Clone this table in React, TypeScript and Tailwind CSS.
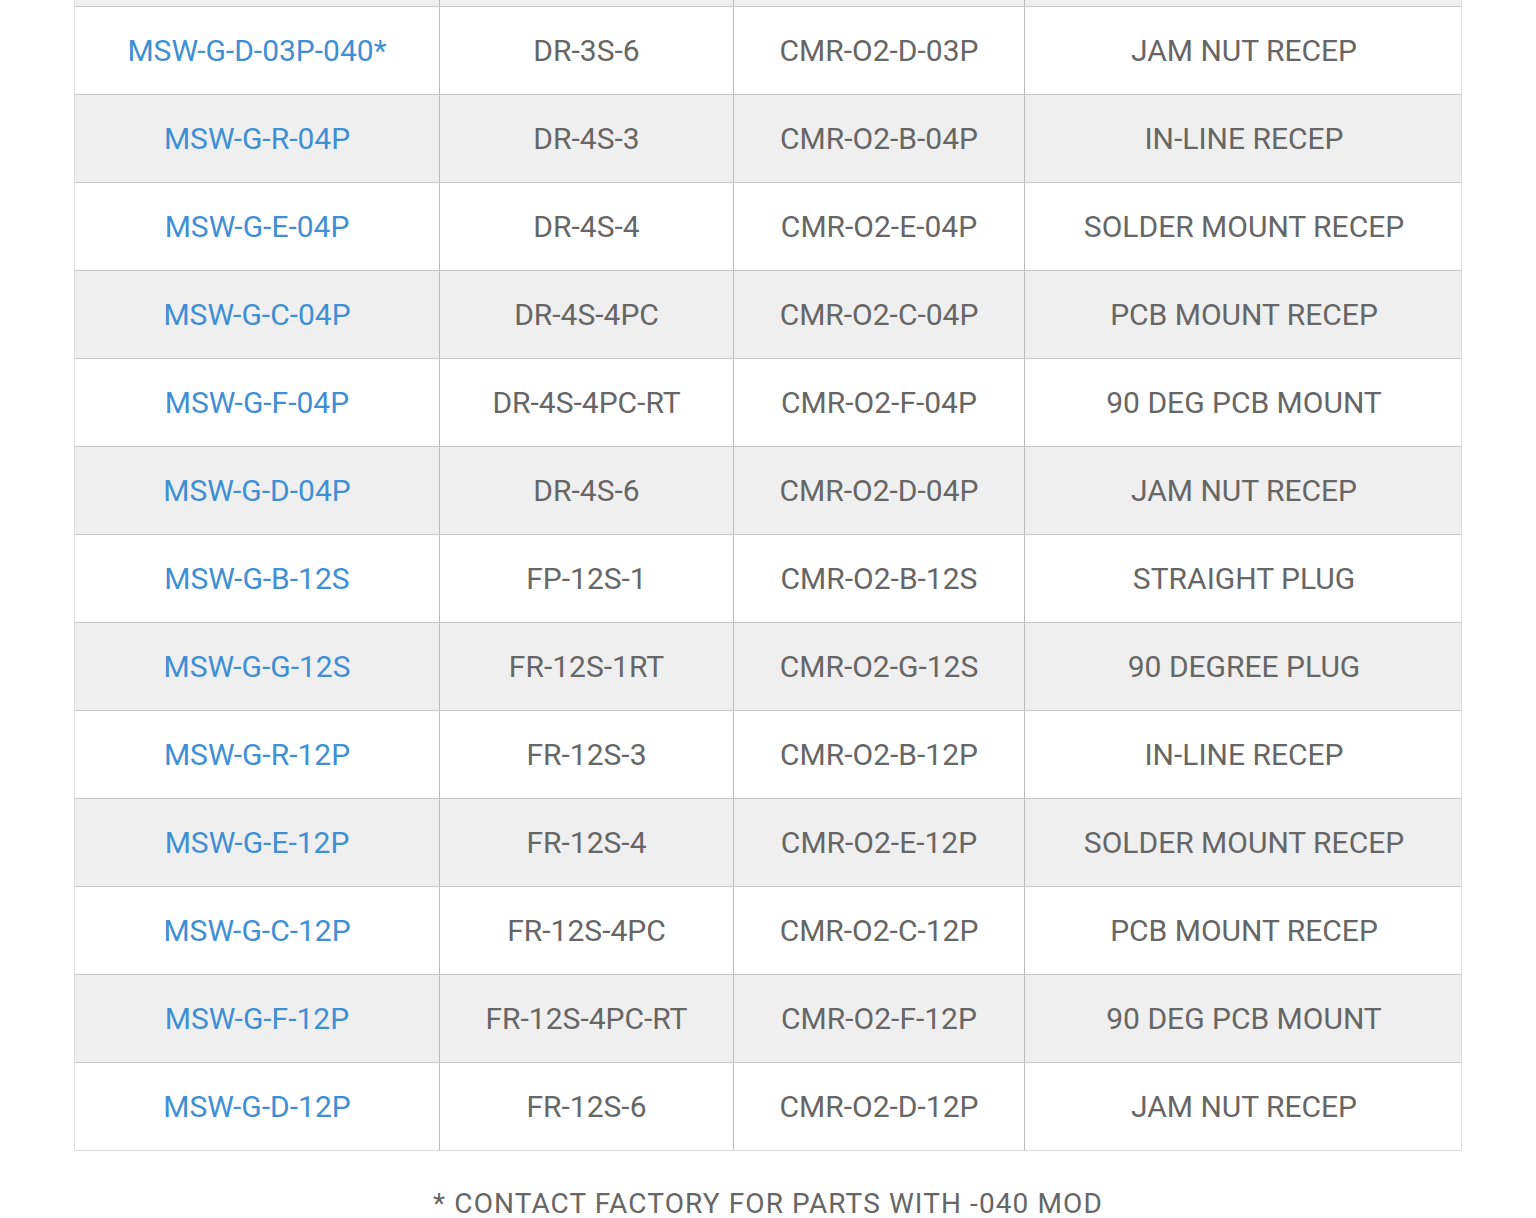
const rows: [string, string, string, string][] = [
  ["MSW-G-D-03P-040*", "DR-3S-6", "CMR-O2-D-03P", "JAM NUT RECEP"],
  ["MSW-G-R-04P", "DR-4S-3", "CMR-O2-B-04P", "IN-LINE RECEP"],
  ["MSW-G-E-04P", "DR-4S-4", "CMR-O2-E-04P", "SOLDER MOUNT RECEP"],
  ["MSW-G-C-04P", "DR-4S-4PC", "CMR-O2-C-04P", "PCB MOUNT RECEP"],
  ["MSW-G-F-04P", "DR-4S-4PC-RT", "CMR-O2-F-04P", "90 DEG PCB MOUNT"],
  ["MSW-G-D-04P", "DR-4S-6", "CMR-O2-D-04P", "JAM NUT RECEP"],
  ["MSW-G-B-12S", "FP-12S-1", "CMR-O2-B-12S", "STRAIGHT PLUG"],
  ["MSW-G-G-12S", "FR-12S-1RT", "CMR-O2-G-12S", "90 DEGREE PLUG"],
  ["MSW-G-R-12P", "FR-12S-3", "CMR-O2-B-12P", "IN-LINE RECEP"],
  ["MSW-G-E-12P", "FR-12S-4", "CMR-O2-E-12P", "SOLDER MOUNT RECEP"],
  ["MSW-G-C-12P", "FR-12S-4PC", "CMR-O2-C-12P", "PCB MOUNT RECEP"],
  ["MSW-G-F-12P", "FR-12S-4PC-RT", "CMR-O2-F-12P", "90 DEG PCB MOUNT"],
  ["MSW-G-D-12P", "FR-12S-6", "CMR-O2-D-12P", "JAM NUT RECEP"],
];

const cols = "grid grid-cols-[365px_294px_291px_438px]";

const App = () => {
  return (
    <div
      className="w-[1536px] h-[1218px] overflow-hidden bg-white"
      style={{ fontFamily: "Roboto, 'Open Sans', sans-serif" }}
    >
      <div className="ml-[74px] w-[1388px]">
        {/* tail of the row above, cut off at the top edge */}
        <div className={`${cols} h-[6px] bg-[#efefef] border-l border-r border-[#dddddd]`}>
          <div className="border-r border-[#bbbbbb]" />
          <div className="border-r border-[#bbbbbb]" />
          <div className="border-r border-[#bbbbbb]" />
          <div />
        </div>

        {/* part rows */}
        <div className="border-l border-r border-b border-[#dddddd]">
          {rows.map((row, i) => (
            <div
              key={i}
              className={`${cols} h-[88px] border-t border-[#c8c8c8] text-[30px] ${
                i % 2 === 1 ? "bg-[#efefef]" : "bg-white"
              }`}
            >
              <div className="flex items-center justify-center border-r border-[#bbbbbb] text-[#3f8fd5]">
                {row[0]}
              </div>
              <div className="flex items-center justify-center border-r border-[#bbbbbb] text-[#666666]">
                {row[1]}
              </div>
              <div className="flex items-center justify-center border-r border-[#bbbbbb] text-[#666666]">
                {row[2]}
              </div>
              <div className="flex items-center justify-center text-[#666666]">{row[3]}</div>
            </div>
          ))}
        </div>
      </div>

      {/* footnote */}
      <div className="mt-[36px] flex justify-center">
        <div className="text-[28px] leading-[34px] tracking-[1.1px] text-[#666666] whitespace-nowrap">
          * CONTACT FACTORY FOR PARTS WITH -040 MOD
        </div>
      </div>
    </div>
  );
};

export default App;
